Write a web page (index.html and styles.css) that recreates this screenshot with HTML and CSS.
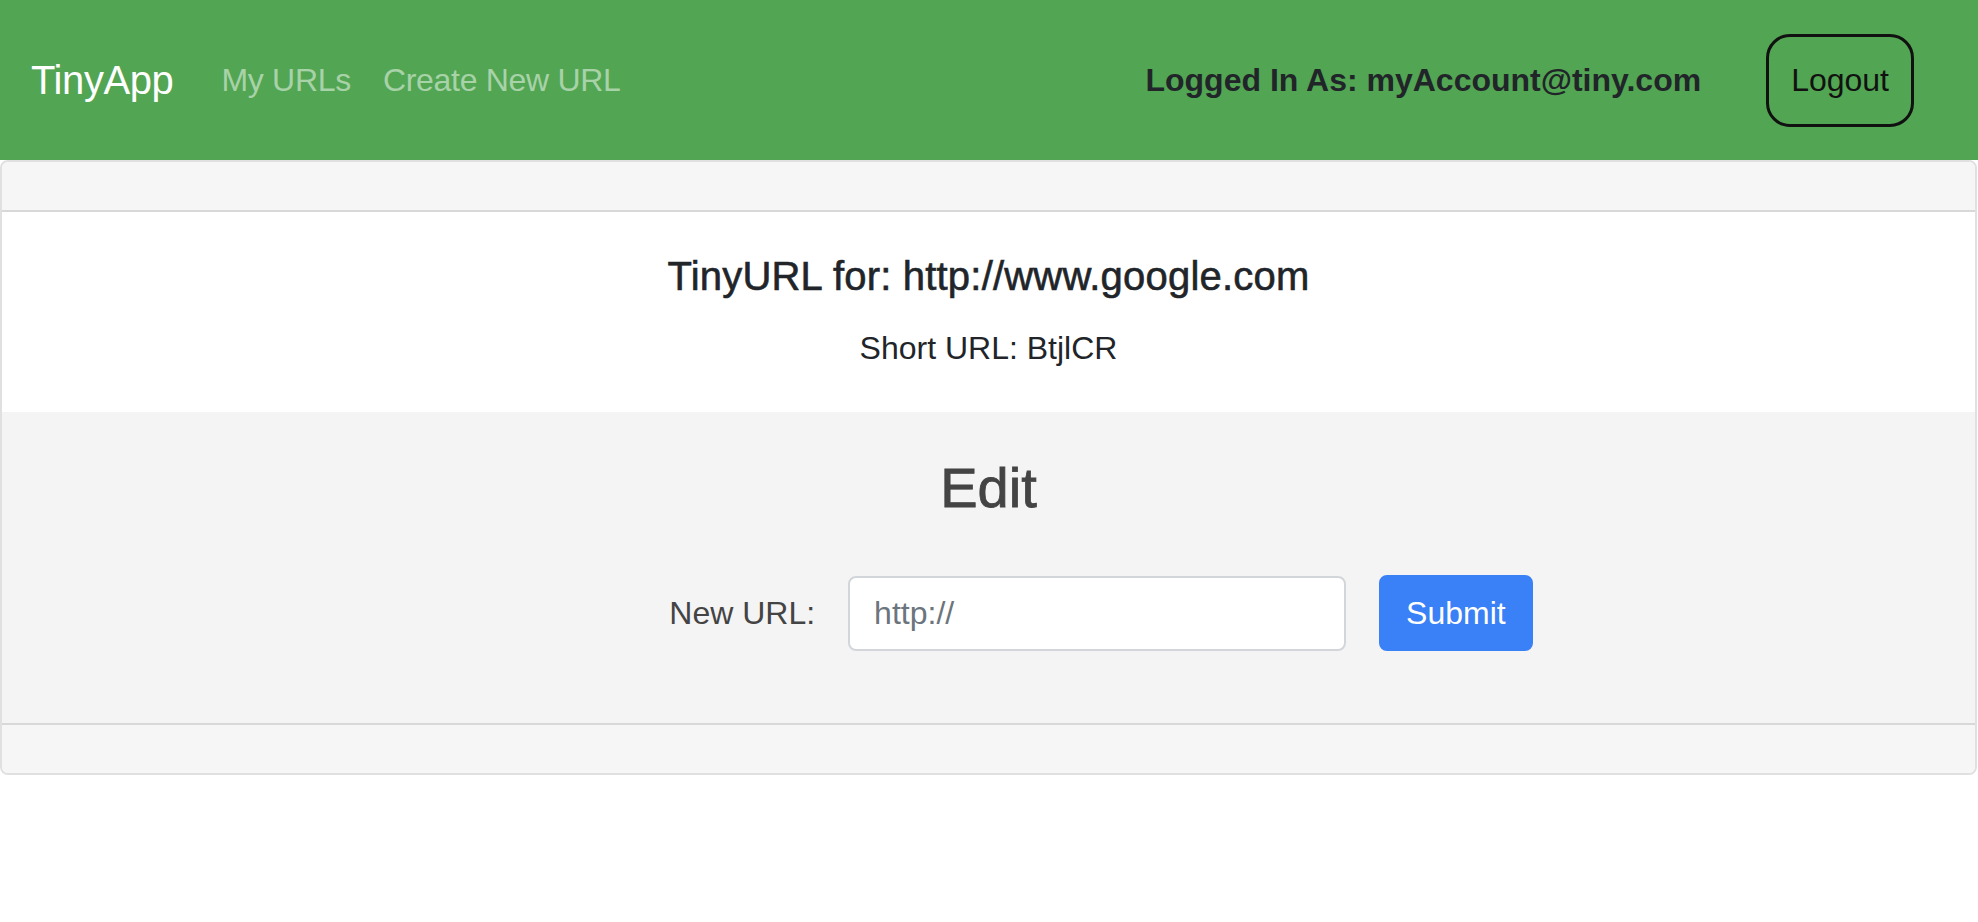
FILE: index.html
```html
<!DOCTYPE html>
<html lang="en">
<head>
<meta charset="utf-8">
<title>TinyApp</title>
<link rel="stylesheet" href="styles.css">
</head>
<body>
<nav class="navbar">
  <a class="brand" href="#">TinyApp</a>
  <div class="nav-links">
    <a class="nav-link" href="#">My URLs</a>
    <a class="nav-link" href="#">Create New URL</a>
  </div>
  <span class="user">Logged In As: myAccount@tiny.com</span>
  <button class="logout" type="button">Logout</button>
</nav>
<main class="card">
  <div class="card-header"></div>
  <div class="card-body">
    <h5 class="card-title">TinyURL for: http://www.google.com</h5>
    <p class="card-text">Short URL: BtjlCR</p>
  </div>
  <section class="edit">
    <h3 class="edit-title">Edit</h3>
    <form class="edit-form">
      <label class="edit-label" for="longURL">New URL:</label>
      <input class="edit-input" id="longURL" type="text" placeholder="http://">
      <button class="submit" type="submit">Submit</button>
    </form>
  </section>
  <div class="card-footer"></div>
</main>
</body>
</html>
```
FILE: styles.css
```css
* { box-sizing: border-box; }
html, body { margin: 0; padding: 0; background: #fff; }
body {
  font-family: "Liberation Sans", Arial, sans-serif;
  color: #212529;
  font-size: 32px;
  line-height: 1.5;
}
.navbar {
  display: flex;
  align-items: center;
  height: 160px;
  padding: 0 64px 0 31px;
  background: #52a552;
}
.brand {
  font-size: 40px;
  color: #fff;
  text-decoration: none;
  margin-right: 32px;
  line-height: 1.5;
  letter-spacing: -0.4px;
}
.nav-links { display: flex; }
.nav-link {
  color: rgba(255,255,255,.5);
  text-decoration: none;
  padding: 0 16px;
  letter-spacing: -0.3px;
}
.user {
  margin-left: auto;
  font-weight: 700;
  color: #212529;
  margin-right: 65px;
}
.logout {
  font-family: inherit;
  font-size: 32px;
  line-height: 49px;
  padding: 19px 22px;
  border: 3px solid #111;
  border-radius: 24px;
  background: transparent;
  color: #111;
}
.card {
  display: block;
  margin: 0 1px 0 0;
  border: 2px solid #e0e0e0;
  border-radius: 8px;
  overflow: hidden;
}
.card-header {
  height: 50px;
  background: #f6f6f6;
  border-bottom: 2px solid #d8d8d8;
}
.card-body {
  padding: 40px;
  text-align: center;
  background: #fff;
}
.card-title {
  margin: 0 0 24px;
  font-size: 40px;
  font-weight: 500;
  line-height: 1.2;
  letter-spacing: 0.2px;
  -webkit-text-stroke: 0.6px #212529;
}
.card-text { margin: 0; }
.edit {
  background: #f4f4f4;
  padding: 42px 0 72px;
  text-align: center;
}
.edit-title {
  margin: 0 0 54px;
  font-size: 56px;
  font-weight: 500;
  line-height: 1.2;
  color: #444;
  -webkit-text-stroke: 0.8px #444;
}
.edit-form {
  display: flex;
  justify-content: center;
  align-items: center;
  gap: 33px;
  padding-left: 225px;
}
.edit-label { color: #444; }
.edit-input {
  width: 498px;
  height: 75px;
  padding: 12px 24px;
  font-family: inherit;
  font-size: 32px;
  color: #495057;
  background: #fff;
  border: 2px solid #d2d6da;
  border-radius: 8px;
}
.edit-input::placeholder { color: #6c757d; }
.submit {
  font-family: inherit;
  font-size: 32px;
  line-height: 48px;
  padding: 12px 25px;
  color: #fff;
  background: #3a80f6;
  border: 2px solid #3a80f6;
  border-radius: 8px;
}
.card-footer {
  height: 50px;
  background: #f6f6f6;
  border-top: 2px solid #d8d8d8;
}
```
